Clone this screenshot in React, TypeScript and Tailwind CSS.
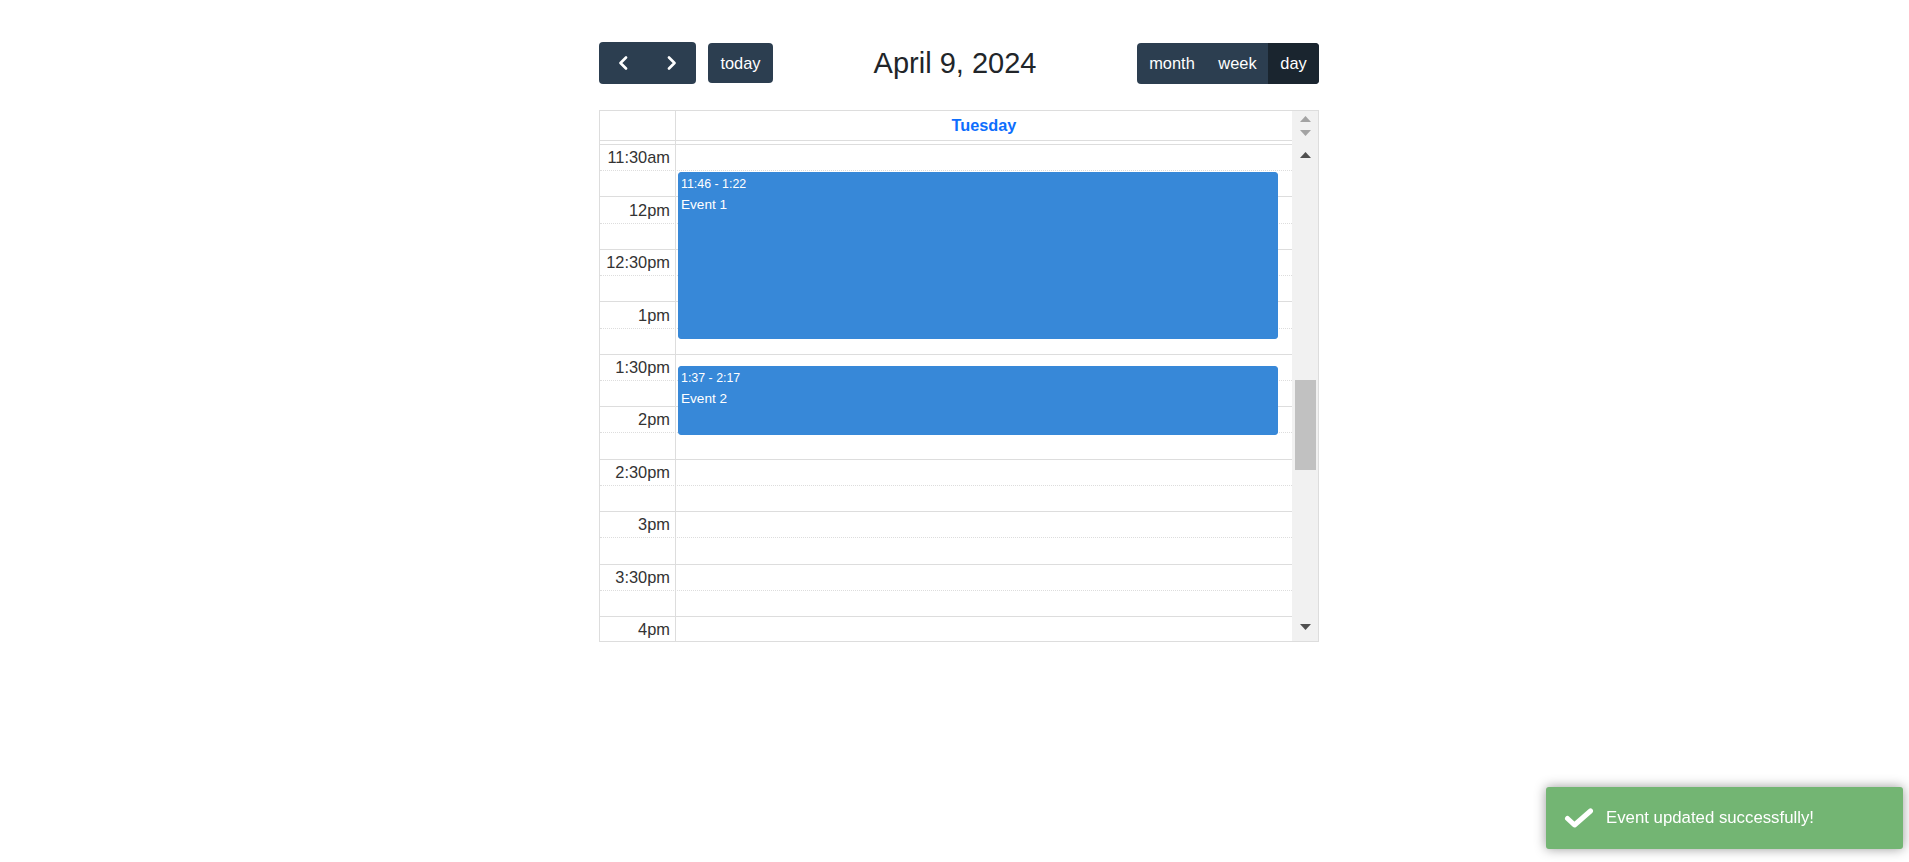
import React from 'react';

interface CalEvent {
  id: number;
  title: string;
  time: string;
  start: number; // minutes after 11:30am (top of the visible window)
  end: number;
}

const SLOT = 26.22; // px per 15-minute slot

const slots = [
  '11:30am', '', '12pm', '', '12:30pm', '', '1pm', '', '1:30pm', '',
  '2pm', '', '2:30pm', '', '3pm', '', '3:30pm', '', '4pm',
];

const events: CalEvent[] = [
  { id: 1, title: 'Event 1', time: '11:46 - 1:22', start: 16, end: 112 },
  { id: 2, title: 'Event 2', time: '1:37 - 2:17', start: 127, end: 167 },
];

function Chevron({ dir }: { dir: 'left' | 'right' }) {
  return (
    <svg width="10" height="14" viewBox="0 0 10 14" fill="none">
      <polyline
        points={dir === 'left' ? '8,1.5 2.5,7 8,12.5' : '2,1.5 7.5,7 2,12.5'}
        stroke="white"
        strokeWidth="2.6"
        strokeLinecap="round"
        strokeLinejoin="round"
      />
    </svg>
  );
}

function Arrow({ up, color }: { up?: boolean; color: string }) {
  return (
    <svg width="11" height="6" viewBox="0 0 11 6" className="shrink-0">
      <polygon points={up ? '0,6 5.5,0 11,6' : '0,0 11,0 5.5,6'} fill={color} />
    </svg>
  );
}

export default function App() {
  return (
    <div className="min-h-screen bg-white text-[#212529] font-['Liberation_Sans',Arial,sans-serif]">
      <div className="ml-[599px] w-[720px] pt-[42px]">
        {/* toolbar */}
        <div className="flex items-center justify-between">
          <div className="flex items-center">
            <div className="flex h-[42px] rounded-[4px] overflow-hidden bg-[#2c3e50]">
              <button className="w-[48px] flex items-center justify-center">
                <Chevron dir="left" />
              </button>
              <button className="w-[49px] flex items-center justify-center">
                <Chevron dir="right" />
              </button>
            </div>
            <button className="ml-[12px] h-[40px] w-[65px] rounded-[4px] bg-[#2c3e50] text-white text-[16.4px]">
              today
            </button>
          </div>
          <h2 className="text-[29px] leading-none text-[#212529]">April 9, 2024</h2>
          <div className="flex h-[41px] rounded-[4px] overflow-hidden bg-[#2c3e50] text-white text-[16.4px]">
            <button className="w-[70px]">month</button>
            <button className="w-[61px]">week</button>
            <button className="w-[51px] bg-[#1a252f]">day</button>
          </div>
        </div>

        {/* calendar */}
        <div className="mt-[26px] h-[532px] border border-[#ddd] flex">
          <div className="flex-1 flex flex-col">
            <div className="h-[30px] flex border-b border-[#ddd]">
              <div className="w-[76px] border-r border-[#ddd]" />
              <div className="flex-1 flex items-center justify-center font-bold text-[16.3px] text-[#0d6efd]">
                Tuesday
              </div>
            </div>
            <div className="h-[3px] flex">
              <div className="w-[76px] border-r border-[#ddd]" />
            </div>
            <div className="relative flex-1 border-t border-[#ddd] overflow-hidden">
              {slots.map((label, i) => (
                <div
                  key={i}
                  className={
                    i % 2 === 0
                      ? 'h-[26.22px] flex border-b border-dotted border-[#ddd]'
                      : 'h-[26.22px] flex border-b border-[#ddd]'
                  }
                >
                  <div className="w-[76px] shrink-0 border-r border-solid border-[#ddd] flex items-center justify-end pr-[5px] text-[16.4px] text-[#333] whitespace-nowrap">
                    {label}
                  </div>
                  <div className="flex-1" />
                </div>
              ))}
              <div className="absolute inset-y-0 left-[76px] right-0">
                {events.map((ev) => (
                  <div
                    key={ev.id}
                    className="absolute left-[2px] right-[14px] rounded-[3px] border border-[#3788d8] bg-[#3788d8] text-white px-[2px] pt-[3px] overflow-hidden"
                    style={{
                      top: (ev.start / 15) * SLOT - 0.5,
                      height: ((ev.end - ev.start) / 15) * SLOT - 1.5,
                    }}
                  >
                    <div className="text-[12.4px] leading-[16px] whitespace-nowrap">{ev.time}</div>
                    <div className="mt-[3px] text-[13.6px] leading-[19px]">{ev.title}</div>
                  </div>
                ))}
              </div>
            </div>
          </div>

          {/* scrollbar strip */}
          <div className="w-[26px] bg-[#f1f1f1] flex flex-col items-center">
            <div className="mt-[5px]">
              <Arrow up color="#a3a3a3" />
            </div>
            <div className="mt-[8px]">
              <Arrow color="#a3a3a3" />
            </div>
            <div className="mt-[16px]">
              <Arrow up color="#505050" />
            </div>
            <div className="self-start ml-[3px] mt-[222px] w-[21px] h-[90px] bg-[#c1c1c1]" />
            <div className="flex-1" />
            <div className="mb-[11px]">
              <Arrow color="#505050" />
            </div>
          </div>
        </div>
      </div>

      {/* toast */}
      <div className="fixed right-[6px] bottom-[13px] w-[357px] h-[62px] rounded-[3px] bg-[#73b573] shadow-[0_0_12px_#999] flex items-center pl-[18px] text-white">
        <svg width="30" height="22" viewBox="0 0 30 22" fill="none">
          <polyline
            points="3.5,11.5 10.5,18 26.5,4"
            stroke="white"
            strokeWidth="5"
            strokeLinecap="round"
            strokeLinejoin="round"
          />
        </svg>
        <span className="ml-[12px] text-[16.8px]">Event updated successfully!</span>
      </div>
    </div>
  );
}
